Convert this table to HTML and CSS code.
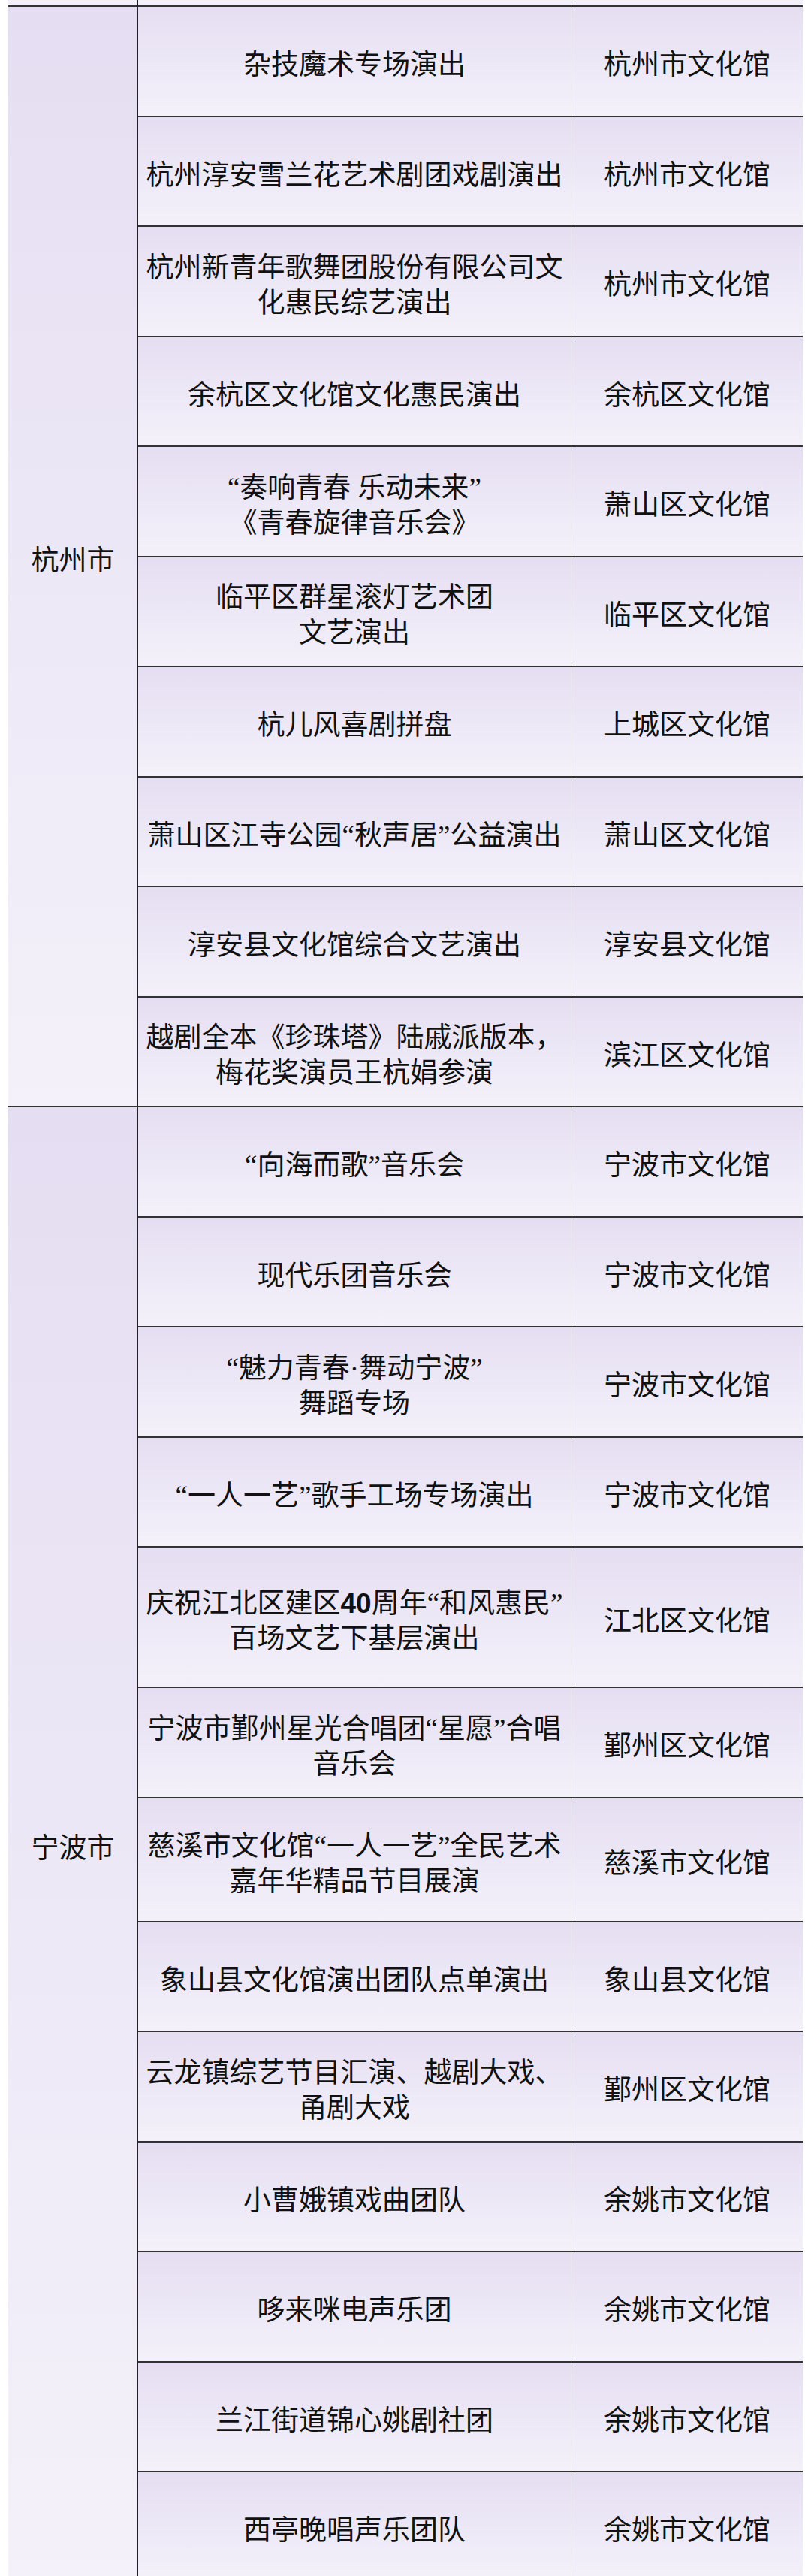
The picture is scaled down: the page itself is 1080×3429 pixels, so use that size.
FILE: index.html
```html
<!DOCTYPE html>
<html lang="zh-CN">
<head>
<meta charset="utf-8">
<title>文化惠民演出</title>
<link rel="stylesheet" href="styles.css">
</head>
<body>
<div class="sheet">
  <div class="cell stub"></div>
  <div class="cell stub"></div>
  <div class="cell stub"></div>

  <div class="cell region span10"><p>杭州市</p></div>
  <div class="cell"><p>杂技魔术专场演出</p></div>
  <div class="cell"><p>杭州市文化馆</p></div>
  <div class="cell"><p>杭州淳安雪兰花艺术剧团戏剧演出</p></div>
  <div class="cell"><p>杭州市文化馆</p></div>
  <div class="cell"><p>杭州新青年歌舞团股份有限公司文<br>化惠民综艺演出</p></div>
  <div class="cell"><p>杭州市文化馆</p></div>
  <div class="cell"><p>余杭区文化馆文化惠民演出</p></div>
  <div class="cell"><p>余杭区文化馆</p></div>
  <div class="cell"><p>“奏响青春 乐动未来”<br>《青春旋律音乐会》</p></div>
  <div class="cell"><p>萧山区文化馆</p></div>
  <div class="cell"><p>临平区群星滚灯艺术团<br>文艺演出</p></div>
  <div class="cell"><p>临平区文化馆</p></div>
  <div class="cell"><p>杭儿风喜剧拼盘</p></div>
  <div class="cell"><p>上城区文化馆</p></div>
  <div class="cell"><p>萧山区江寺公园“秋声居”公益演出</p></div>
  <div class="cell"><p>萧山区文化馆</p></div>
  <div class="cell"><p>淳安县文化馆综合文艺演出</p></div>
  <div class="cell"><p>淳安县文化馆</p></div>
  <div class="cell"><p>越剧全本《珍珠塔》陆戚派版本，<br>梅花奖演员王杭娟参演</p></div>
  <div class="cell"><p>滨江区文化馆</p></div>

  <div class="cell region span13"><p>宁波市</p></div>
  <div class="cell"><p>“向海而歌”音乐会</p></div>
  <div class="cell"><p>宁波市文化馆</p></div>
  <div class="cell"><p>现代乐团音乐会</p></div>
  <div class="cell"><p>宁波市文化馆</p></div>
  <div class="cell"><p>“魅力青春·舞动宁波”<br>舞蹈专场</p></div>
  <div class="cell"><p>宁波市文化馆</p></div>
  <div class="cell"><p>“一人一艺”歌手工场专场演出</p></div>
  <div class="cell"><p>宁波市文化馆</p></div>
  <div class="cell"><p>庆祝江北区建区<span class="num">40</span>周年“和风惠民”<br>百场文艺下基层演出</p></div>
  <div class="cell"><p>江北区文化馆</p></div>
  <div class="cell"><p>宁波市鄞州星光合唱团“星愿”合唱<br>音乐会</p></div>
  <div class="cell"><p>鄞州区文化馆</p></div>
  <div class="cell"><p>慈溪市文化馆“一人一艺”全民艺术<br>嘉年华精品节目展演</p></div>
  <div class="cell"><p>慈溪市文化馆</p></div>
  <div class="cell"><p>象山县文化馆演出团队点单演出</p></div>
  <div class="cell"><p>象山县文化馆</p></div>
  <div class="cell"><p>云龙镇综艺节目汇演、越剧大戏、<br>甬剧大戏</p></div>
  <div class="cell"><p>鄞州区文化馆</p></div>
  <div class="cell"><p>小曹娥镇戏曲团队</p></div>
  <div class="cell"><p>余姚市文化馆</p></div>
  <div class="cell"><p>哆来咪电声乐团</p></div>
  <div class="cell"><p>余姚市文化馆</p></div>
  <div class="cell"><p>兰江街道锦心姚剧社团</p></div>
  <div class="cell"><p>余姚市文化馆</p></div>
  <div class="cell"><p>西亭晚唱声乐团队</p></div>
  <div class="cell"><p>余姚市文化馆</p></div>
</div>
</body>
</html>
```

FILE: styles.css
```css
html, body {
  margin: 0;
  padding: 0;
  background: #ffffff;
  overflow: hidden;
}

.sheet {
  display: grid;
  grid-template-columns: 173px 577px 309px;
  grid-template-rows: 9px repeat(14, 146.5px) 187px 146.5px 165px repeat(6, 146.5px);
  width: 1060px;
  margin-left: 10px;
  border-left: 1px solid #222;
  box-sizing: border-box;
  font-family: "Liberation Serif", "Noto Sans CJK SC", sans-serif;
  font-size: 37px;
  line-height: 47px;
  color: #111;
}

.cell {
  box-sizing: border-box;
  display: flex;
  align-items: center;
  justify-content: center;
  padding: 11px 4px 0;
  border-right: 1px solid #222;
  border-bottom: 2px solid #333;
  background: linear-gradient(to bottom, #e5def2, #f4f1fa);
}

.cell p {
  margin: 0;
  text-align: center;
}

.stub {
  padding: 0;
  background: #f3f0fa;
}

.region {
  grid-column: 1;
}

.span10 {
  grid-row: span 10;
}

.span13 {
  grid-row: span 13;
}

.num {
  font-family: "Liberation Sans", sans-serif;
  font-weight: 700;
}
```
